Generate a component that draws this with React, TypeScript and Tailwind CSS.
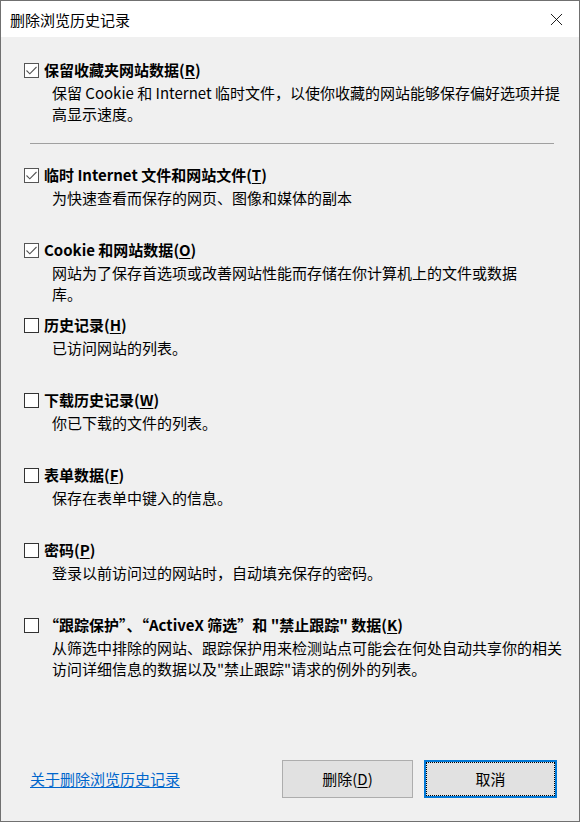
import { X } from 'lucide-react';

type Item = {
  title: React.ReactNode;
  desc: string;
  checked: boolean;
  narrow?: boolean;
};

const Key = ({ k }: { k: string }) => (
  <>
    (<span className="underline underline-offset-2">{k}</span>)
  </>
);

const items: Item[] = [
  {
    title: (
      <>
        临时 Internet 文件和网站文件<Key k="T" />
      </>
    ),
    desc: '为快速查看而保存的网页、图像和媒体的副本',
    checked: true,
  },
  {
    title: (
      <>
        Cookie 和网站数据<Key k="O" />
      </>
    ),
    desc: '网站为了保存首选项或改善网站性能而存储在你计算机上的文件或数据库。',
    checked: true,
    narrow: true,
  },
  {
    title: (
      <>
        历史记录<Key k="H" />
      </>
    ),
    desc: '已访问网站的列表。',
    checked: false,
  },
  {
    title: (
      <>
        下载历史记录<Key k="W" />
      </>
    ),
    desc: '你已下载的文件的列表。',
    checked: false,
  },
  {
    title: (
      <>
        表单数据<Key k="F" />
      </>
    ),
    desc: '保存在表单中键入的信息。',
    checked: false,
  },
  {
    title: (
      <>
        密码<Key k="P" />
      </>
    ),
    desc: '登录以前访问过的网站时，自动填充保存的密码。',
    checked: false,
  },
  {
    title: (
      <>
        “跟踪保护”、“ActiveX 筛选”和 "禁止跟踪" 数据<Key k="K" />
      </>
    ),
    desc: '从筛选中排除的网站、跟踪保护用来检测站点可能会在何处自动共享你的相关访问详细信息的数据以及"禁止跟踪"请求的例外的列表。',
    checked: false,
  },
];

const CheckBox = ({ checked }: { checked: boolean }) => (
  <span
    className={`flex h-[15px] w-[15px] shrink-0 items-center justify-center border bg-white ${
      checked ? 'border-[#555]' : 'border-[#333]'
    }`}
  >
    {checked && (
      <svg width="13" height="13" viewBox="0 0 13 13" fill="none">
        <path d="M1.5 6.5 L4.8 9.8 L11.5 3" stroke="#555" strokeWidth="1.1" />
      </svg>
    )}
  </span>
);

const Option = ({ item }: { item: Item }) => (
  <div className="flex h-[75px] flex-col">
    <label className="flex h-[24px] items-center gap-[5px] font-bold">
      <CheckBox checked={item.checked} />
      <span>{item.title}</span>
    </label>
    <p
      className={`ml-[28px] leading-[21px] ${
        item.narrow ? 'w-[480px]' : 'mr-[10px]'
      }`}
    >
      {item.desc}
    </p>
  </div>
);

export default function App() {
  const font = "font-['Noto_Sans_CJK_SC','Noto_Sans',sans-serif]";
  return (
    <div
      className={`flex h-[822px] w-[580px] flex-col border border-[#707070] bg-[#f0f0f0] text-[15px] text-black ${font}`}
    >
      <header className="flex h-[36px] shrink-0 items-center justify-between bg-white pl-[9px] pr-[12px]">
        <span className="leading-none">删除浏览历史记录</span>
        <X size={21} strokeWidth={1} className="text-black" />
      </header>

      <main className="flex flex-1 flex-col pl-[23px] pt-[21px]">
        <div className="flex flex-col">
          <label className="flex h-[24px] items-center gap-[5px] font-bold">
            <CheckBox checked />
            <span>
              保留收藏夹网站数据<Key k="R" />
            </span>
          </label>
          <p className="ml-[28px] mr-[10px] leading-[21px]">
            保留 Cookie 和 Internet 临时文件，以使你收藏的网站能够保存偏好选项并提高显示速度。
          </p>
        </div>

        <div className="mb-[19px] ml-[6px] mr-[25px] mt-[19px] h-px bg-[#a0a0a0]" />

        {items.map((item, i) => (
          <Option key={i} item={item} />
        ))}

        <div className="mt-auto flex items-center justify-between pb-[23px] pr-[22px]">
          <a href="#" className="ml-[6px] text-[#0066cc] underline underline-offset-2">
            关于删除浏览历史记录
          </a>
          <div className="flex gap-[11px]">
            <button className="h-[38px] w-[131px] border border-[#adadad] bg-[#e1e1e1]">
              删除<Key k="D" />
            </button>
            <button className="h-[38px] w-[133px] border-2 border-[#0078d7] bg-[#e1e1e1] outline-1 outline-dotted outline-black outline-offset-[-3px]">
              取消
            </button>
          </div>
        </div>
      </main>
    </div>
  );
}
